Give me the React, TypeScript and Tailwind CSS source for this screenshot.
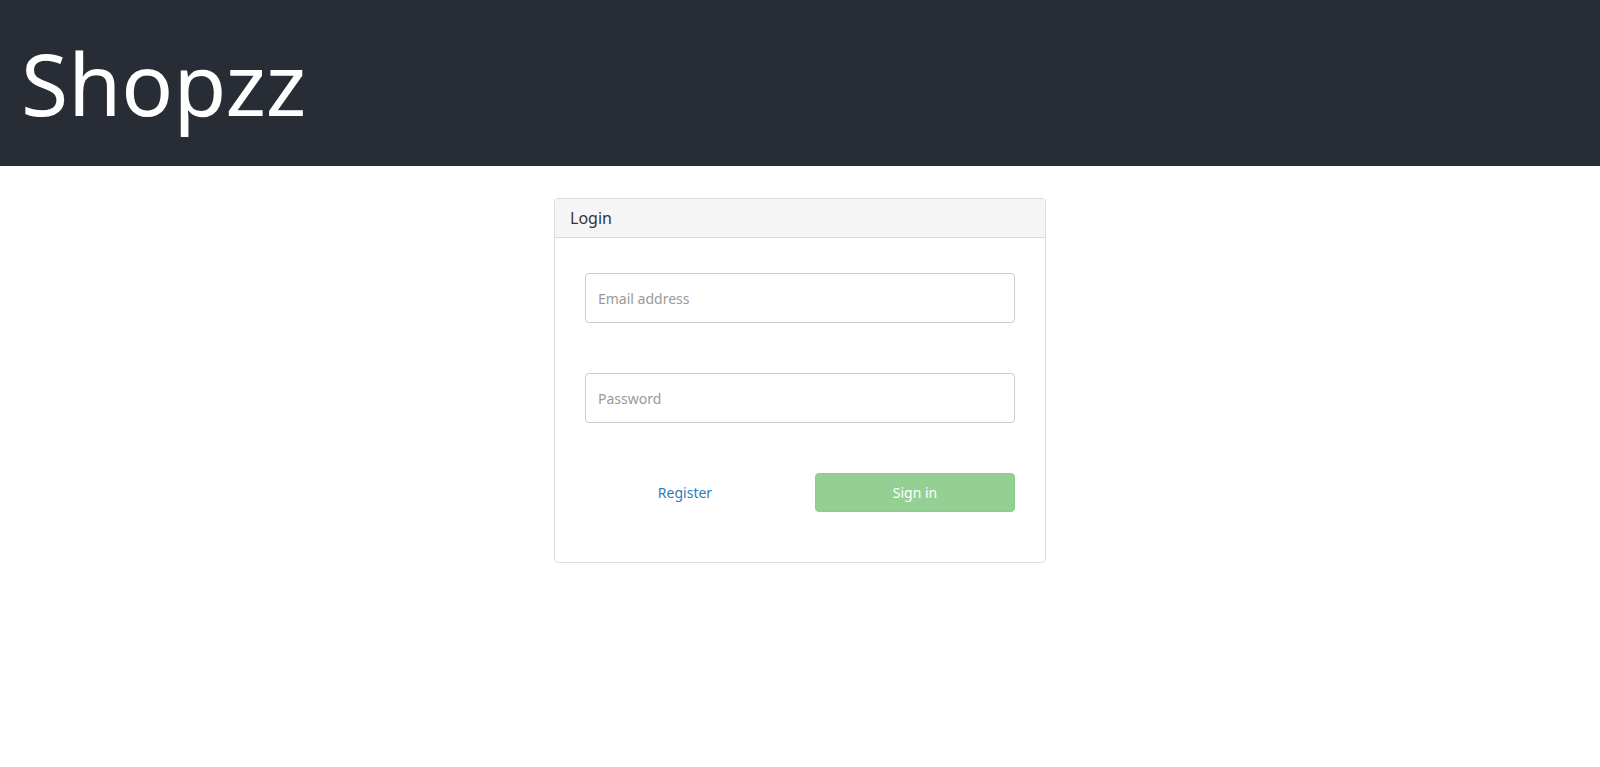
const App = () => {
  return (
    <div className="min-h-screen bg-white font-['Noto_Sans',sans-serif] text-[#333]">
      <Header />
      <main className="flex justify-center pt-[32px]">
        <LoginCard />
      </main>
    </div>
  );
};

const Header = () => (
  <header className="h-[166px] bg-[#282c34] px-[21px] flex items-start">
    <h1 className="text-[86px] leading-none text-white font-normal mt-[40px]">
      Shopzz
    </h1>
  </header>
);

const LoginCard = () => (
  <div className="w-[492px] border border-[#ddd] rounded-[4px] overflow-hidden">
    <div className="h-[39px] bg-[#f5f5f5] border-b border-[#ddd] px-[15px] flex items-center text-[16px] text-[#333]">
      Login
    </div>
    <form className="px-[30px] pt-[35px] pb-[50px] flex flex-col">
      <input
        type="email"
        placeholder="Email address"
        className="h-[50px] w-full border border-[#ccc] rounded-[4px] px-[12px] text-[14px] placeholder:text-[#999] outline-none"
      />
      <input
        type="password"
        placeholder="Password"
        className="mt-[50px] h-[50px] w-full border border-[#ccc] rounded-[4px] px-[12px] text-[14px] placeholder:text-[#999] outline-none"
      />
      <div className="mt-[50px] grid grid-cols-2 gap-[30px]">
        <a href="#" className="h-[39px] flex items-center justify-center text-[14px] text-[#337ab7]">
          Register
        </a>
        <button
          type="button"
          disabled
          className="h-[39px] rounded-[4px] bg-[#94d094] border border-[#8ccc8c] text-[14px] text-white"
        >
          Sign in
        </button>
      </div>
    </form>
  </div>
);

export default App;
